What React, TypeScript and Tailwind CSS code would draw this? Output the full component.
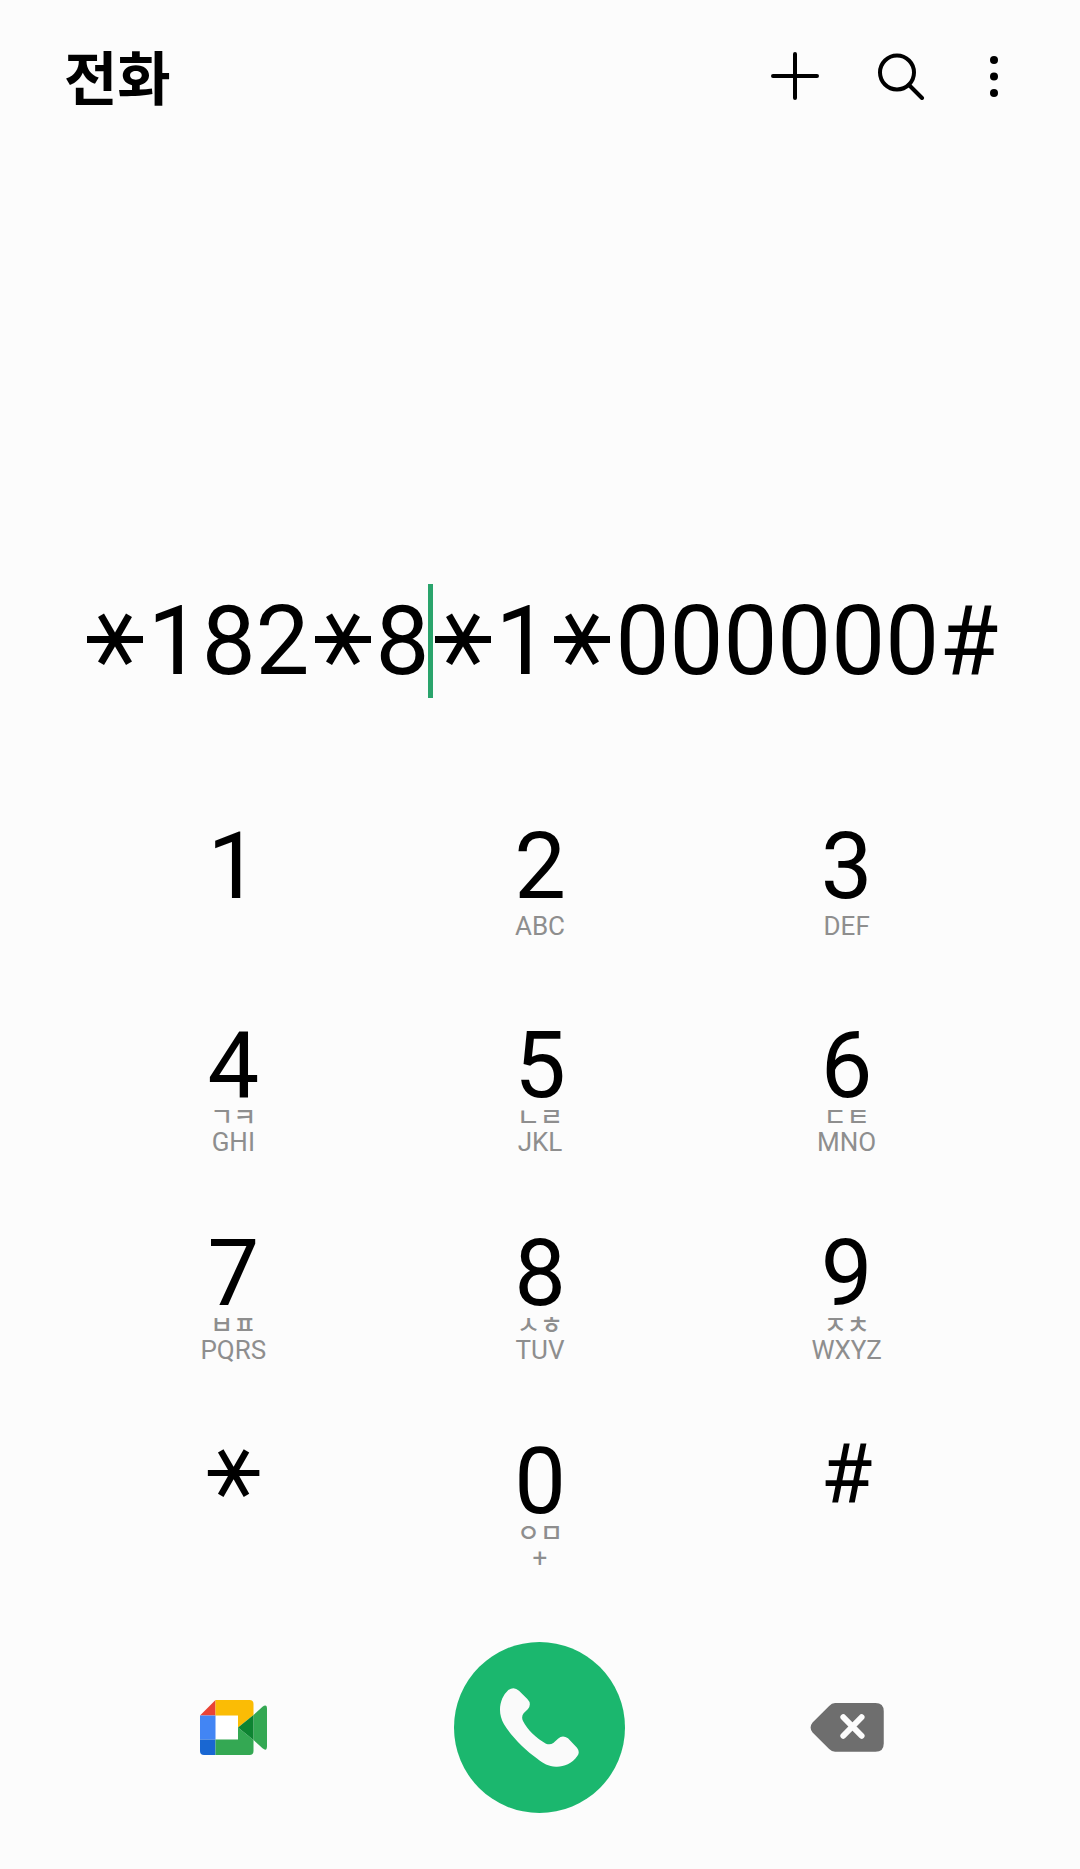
import { useState } from "react";

type Key = { digit: string; korean?: string; latin?: string };

const KEYS: Key[] = [
  { digit: "1" },
  { digit: "2", latin: "ABC" },
  { digit: "3", latin: "DEF" },
  { digit: "4", korean: "ㄱㅋ", latin: "GHI" },
  { digit: "5", korean: "ㄴㄹ", latin: "JKL" },
  { digit: "6", korean: "ㄷㅌ", latin: "MNO" },
  { digit: "7", korean: "ㅂㅍ", latin: "PQRS" },
  { digit: "8", korean: "ㅅㅎ", latin: "TUV" },
  { digit: "9", korean: "ㅈㅊ", latin: "WXYZ" },
  { digit: "*" },
  { digit: "0", korean: "ㅇㅁ", latin: "+" },
  { digit: "#" },
];

/* The dialler's star has a horizontal stroke, as the sextile sign does. */
function Star({ large = false }: { large?: boolean }) {
  return (
    <span
      className={
        "flex items-center justify-center font-['DejaVu_Sans'] " +
        (large
          ? "h-[114px] w-[66px] pb-[22px] text-[100px] leading-[90px]"
          : "h-[76px] w-[60px] pb-[18px] text-[92px] leading-[58px]")
      }
    >
      ⚹
    </span>
  );
}

function PlusIcon() {
  return (
    <svg width="48" height="48" viewBox="0 0 48 48" stroke="#000" strokeWidth="4" strokeLinecap="round">
      <path d="M24 2V46M2 24H46" />
    </svg>
  );
}

function SearchIcon() {
  return (
    <svg width="48" height="48" viewBox="0 0 48 48" fill="none" stroke="#000" strokeWidth="4" strokeLinecap="round">
      <circle cx="20" cy="20.500" r="17" />
      <path d="M32 33L45 46" />
    </svg>
  );
}

function MoreIcon() {
  return (
    <svg width="22" height="48" viewBox="0 0 22 48" fill="#000">
      <circle cx="11" cy="8" r="4" />
      <circle cx="11" cy="24.500" r="4" />
      <circle cx="11" cy="41" r="4" />
    </svg>
  );
}

function MeetIcon() {
  return (
    <svg width="67" height="55" viewBox="0 0 67 55">
      <path d="M15.500 15.500H38V39.500H15.500Z" fill="#fff" />
      <path d="M0 15.500L15.500 0V15.500Z" fill="#e94335" />
      <path d="M0 15.500H15.500V39.500H0Z" fill="#4285f4" />
      <path d="M0 39.500H15.500V55H4Q0 55 0 51Z" fill="#1967d2" />
      <path d="M15.500 0H49.500Q53.500 0 53.500 4V15L38 27.500V15.500H15.500Z" fill="#fbbc05" />
      <path d="M15.500 55H49.500Q53.500 55 53.500 51V40L38 27.500V39.500H15.500Z" fill="#34a853" />
      <path d="M53.500 15L62.500 6.800Q67 3.500 67 9V46Q67 52 62.500 48.200L53.500 40Z" fill="#34a853" />
      <path d="M38 27.500L53.500 15V40Z" fill="#0d8431" />
    </svg>
  );
}

function HandsetIcon() {
  return (
    <svg className="size-full" viewBox="42 36 513 513" fill="#fafafa">
      <path d="M205 180Q222 168 237 182L262 207Q276 221 264 237L251 250Q243 260 249 273C262 300 290 325 318 341Q330 346 340 339L354 326Q368 313 384 325L411 353Q421 366 412 378C395 402 370 411 348 410C325 409 310 400 292 386C255 360 215 320 192 283C178 258 176 232 187 205Q194 190 205 180Z" />
    </svg>
  );
}

function BackspaceIcon() {
  return (
    <svg width="74" height="49" viewBox="55 69 222 148">
      <path
        d="M130 69H252Q277 69 277 94V191Q277 216 252 216H130Q120 216 112 208L62 158Q50 143 62 128L112 78Q120 69 130 69Z"
        fill="#6e6e6e"
      />
      <path d="M155 112L210 168M210 112L155 168" stroke="#fcfcfc" strokeWidth="18" strokeLinecap="round" />
    </svg>
  );
}

export default function App() {
  const [before, setBefore] = useState("*182*8");
  const [after, setAfter] = useState("*1*000000#");

  const glyphs = (text: string) =>
    text.split("").map((c, i) => (c === "*" ? <Star key={i} large /> : <span key={i}>{c}</span>));

  return (
    <div className="flex min-h-screen flex-col bg-[#fcfcfc] font-[Roboto,'Noto_Sans_CJK_KR',sans-serif] text-black">
      <header className="flex items-center justify-between pt-[34px] pr-[75px] pl-[64px]">
        <h1 className="pb-[2px] font-['Noto_Sans_CJK_KR',sans-serif] text-[58px] leading-[82px] font-bold">전화</h1>
        <div className="flex items-center gap-[58px]">
          <button aria-label="연락처 추가"><PlusIcon /></button>
          <button aria-label="검색"><SearchIcon /></button>
          <button aria-label="더보기"><MoreIcon /></button>
        </div>
      </header>

      <main className="flex flex-1 flex-col justify-end pb-[56px]">
        <label className="mb-[123px] flex h-[114px] items-center justify-center text-[96px] leading-[114px]">
          <input
            type="tel"
            aria-label="전화번호"
            className="sr-only"
            value={before + after}
            onChange={(e) => {
              setBefore(e.target.value);
              setAfter("");
            }}
          />
          {glyphs(before)}
          <span className="relative h-[114px] w-0">
            <span className="absolute inset-y-0 right-0 w-[5px] translate-x-[3px] bg-[#2aa46c]" />
          </span>
          {glyphs(after)}
        </label>

        <div className="grid grid-cols-3 grid-rows-[199px_208px_208px_auto] px-[80px]">
          {KEYS.map(({ digit, korean, latin }) => (
            <button
              key={digit}
              aria-label={digit}
              className="flex flex-col items-center justify-start self-start justify-self-center"
              onClick={() => setBefore(before + digit)}
            >
              {digit === "*" ? (
                <Star />
              ) : digit === "#" ? (
                <span className="text-[84px] leading-[78px]">#</span>
              ) : (
                <span className="text-[92px] leading-[92px]">{digit}</span>
              )}
              {korean && (
                <span className="h-[17px] font-['Noto_Sans_CJK_KR',sans-serif] text-[25px] leading-[6px] font-medium text-[#8e8e8e]">
                  {korean}
                </span>
              )}
              {latin && <span className="text-[26px] leading-[26px] text-[#8e8e8e]">{latin}</span>}
            </button>
          ))}
        </div>

        <div className="mt-[71px] grid grid-cols-3 place-items-center px-[80px]">
          <button aria-label="영상 통화"><MeetIcon /></button>
          <button aria-label="통화" className="size-[171px] rounded-full bg-[#1bb76e]"><HandsetIcon /></button>
          <button
            aria-label="지우기"
            onClick={() => setBefore(before.slice(0, -1))}
          >
            <BackspaceIcon />
          </button>
        </div>
      </main>
    </div>
  );
}
